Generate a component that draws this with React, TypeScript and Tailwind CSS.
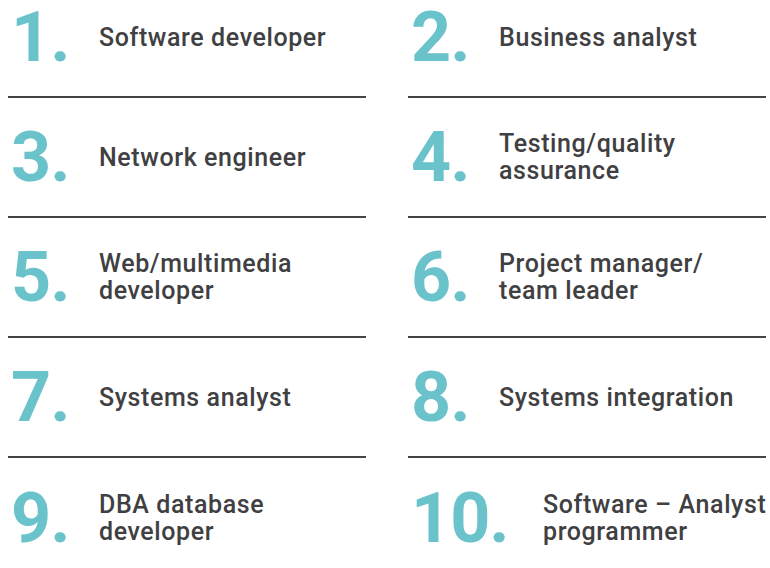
import React from "react";

interface Job {
  num: string;
  lines: string[];
}

const left: Job[] = [
  { num: "1", lines: ["Software developer"] },
  { num: "3", lines: ["Network engineer"] },
  { num: "5", lines: ["Web/multimedia", "developer"] },
  { num: "7", lines: ["Systems analyst"] },
  { num: "9", lines: ["DBA database", "developer"] },
];

const right: Job[] = [
  { num: "2", lines: ["Business analyst"] },
  { num: "4", lines: ["Testing/quality", "assurance"] },
  { num: "6", lines: ["Project manager/", "team leader"] },
  { num: "8", lines: ["Systems integration"] },
  { num: "10", lines: ["Software \u2013 Analyst", "programmer"] },
];

const Row = ({ job, first, last }: { job: Job; first: boolean; last: boolean }) => (
  <div
    className={
      "flex items-center " +
      (first ? "h-[98px] pb-[22px] " : "h-[120px] ") +
      (last ? "" : "border-b-2 border-[#444444]")
    }
  >
    <span
      className={
        "shrink-0 pl-[3px] text-[70px] leading-none font-bold text-[#6ac2cb] font-['Roboto',sans-serif] tracking-[-1px] " +
        (job.num.length > 1 ? "w-[135px]" : "w-[91px]")
      }
    >
      {job.num}.
    </span>
    <div className="text-[25px] leading-[27px] font-medium text-[#404042] font-['Roboto',sans-serif] tracking-[0.6px] whitespace-nowrap">
      {job.lines.map((l) => (
        <div key={l}>{l}</div>
      ))}
    </div>
  </div>
);

const Column = ({ jobs }: { jobs: Job[] }) => (
  <div className="flex flex-col w-[358px]">
    {jobs.map((j, i) => (
      <Row key={j.num} job={j} first={i === 0} last={i === jobs.length - 1} />
    ))}
  </div>
);

export default function App() {
  return (
    <div className="w-[770px] h-[568px] overflow-hidden bg-white">
      <div className="flex gap-[42px] pl-[8px]">
        <Column jobs={left} />
        <Column jobs={right} />
      </div>
    </div>
  );
}
